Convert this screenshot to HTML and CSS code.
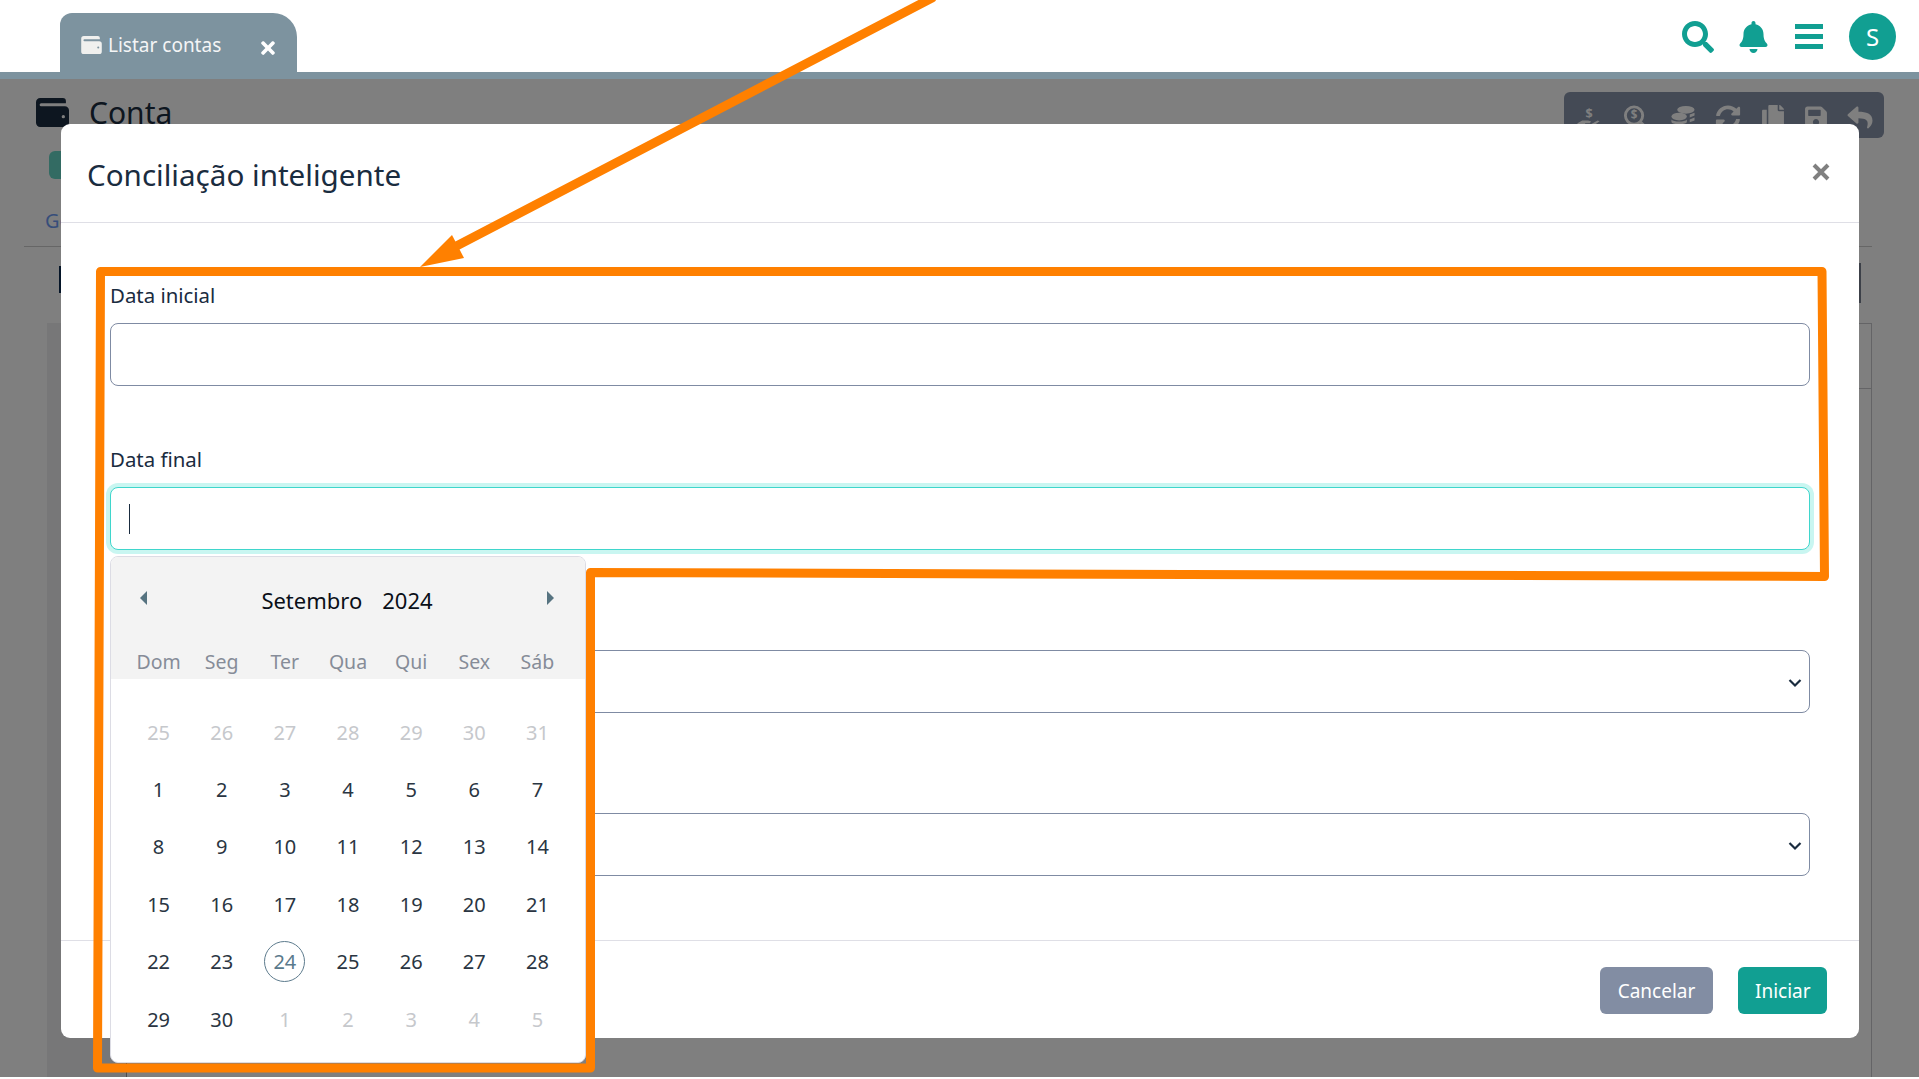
FILE: index.html
```html
<!DOCTYPE html>
<html lang="pt-BR">
<head>
    <meta charset="UTF-8">
    <meta name="viewport" content="width=device-width, initial-scale=1.0">
    <title>Conciliação inteligente</title>
    <link rel="stylesheet" href="styles.css">
</head>
<body>
<div class="page">

    <header class="topbar">
        <div class="tab">
            <svg class="tab-wallet" viewBox="0 0 32 28"><path d="M4 0h22a3 3 0 0 1 3 3v2H5a1.5 1.5 0 0 0 0 3h23a4 4 0 0 1 4 4v12a4 4 0 0 1-4 4H4a4 4 0 0 1-4-4V4a4 4 0 0 1 4-4z"/><circle cx="26.5" cy="18" r="1.6" fill="#7d939f"/></svg>
            <span class="tab-label">Listar contas</span>
            <svg class="tab-close" viewBox="0 0 352 512"><path d="M242.72 256l100.07-100.07c12.28-12.28 12.28-32.19 0-44.48l-22.24-22.24c-12.28-12.28-32.19-12.28-44.48 0L176 189.28 75.93 89.21c-12.28-12.28-32.19-12.28-44.48 0L9.21 111.45c-12.28 12.28-12.28 32.19 0 44.48L109.28 256 9.21 356.07c-12.28 12.28-12.28 32.19 0 44.48l22.24 22.24c12.28 12.28 32.2 12.28 44.48 0L176 322.72l100.07 100.07c12.28 12.28 32.2 12.28 44.48 0l22.24-22.24c12.28-12.28 12.28-32.19 0-44.48L242.72 256z"/></svg>
        </div>
        <div class="top-actions">
            <svg class="ic-search" viewBox="0 0 512 512"><path d="M505 442.7L405.3 343c-4.5-4.5-10.6-7-17-7H372c27.6-35.3 44-79.7 44-128C416 93.1 322.9 0 208 0S0 93.1 0 208s93.1 208 208 208c48.3 0 92.7-16.4 128-44v16.3c0 6.4 2.5 12.5 7 17l99.7 99.7c9.4 9.4 24.6 9.4 33.9 0l28.3-28.3c9.4-9.4 9.4-24.6.1-34zM208 336c-70.7 0-128-57.2-128-128 0-70.7 57.2-128 128-128 70.7 0 128 57.2 128 128 0 70.7-57.2 128-128 128z"/></svg>
            <svg class="ic-bell" viewBox="0 0 448 512"><path d="M224 512c35.32 0 63.97-28.65 63.97-64H160.03c0 35.35 28.65 64 63.97 64zm215.39-149.71c-19.32-20.76-55.47-51.99-55.47-154.29 0-77.7-54.48-139.9-127.94-155.16V32c0-17.67-14.32-32-31.98-32s-31.98 14.33-31.98 32v20.84C118.56 68.1 64.08 130.3 64.08 208c0 102.3-36.15 133.53-55.47 154.29-6 6.45-8.66 14.16-8.61 21.71.11 16.4 12.98 32 32.1 32h383.8c19.12 0 32-15.6 32.1-32 .05-7.55-2.61-15.27-8.61-21.71z"/></svg>
            <div class="ic-menu"><span></span><span></span><span></span></div>
            <div class="avatar">S</div>
        </div>
    </header>
    <div class="tab-line"></div>

    <!-- page behind the modal -->
    <main class="content">
        <div class="title-row">
            <svg class="title-wallet" viewBox="0 0 32 28"><path d="M4 0h22a3 3 0 0 1 3 3v2H5a1.5 1.5 0 0 0 0 3h23a4 4 0 0 1 4 4v12a4 4 0 0 1-4 4H4a4 4 0 0 1-4-4V4a4 4 0 0 1 4-4z"/><circle cx="26.5" cy="18" r="1.6" fill="#fff"/></svg>
            <h1>Conta</h1>
            <div class="toolbar">
                <svg viewBox="0 0 26 26"><text x="13" y="14" text-anchor="middle" class="tool-text">$</text><path d="M1 19l5-3h6l3 1-1 2H9v1h6l7-4 2 1-8 6-5 1-6-1-4 1z"/></svg>
                <svg viewBox="0 0 26 26"><circle cx="12" cy="11" r="9" class="tool-ring"/><text x="12" y="15" text-anchor="middle" class="tool-small">$</text><path d="M18 19l2-2 6 6-2 2z"/></svg>
                <svg viewBox="0 0 26 26"><ellipse cx="16" cy="5" rx="9" ry="4"/><path d="M20 10l5-2v3l-5 2zM20 15l5-2v3l-5 2z"/><ellipse cx="9" cy="12" rx="8" ry="4"/><path d="M1 15c2 3 14 3 16 0v3c-2 3-14 3-16 0zM1 20c2 3 14 3 16 0v2c-2 3-14 3-16 0z"/></svg>
                <svg viewBox="0 0 512 512"><path d="M370.72 133.28C339.458 104.008 298.888 87.962 255.848 88c-77.458.068-144.328 53.178-162.791 126.85-1.344 5.363-6.122 9.15-11.651 9.15H24.103c-7.498 0-13.194-6.807-11.807-14.176C33.933 94.924 134.813 8 256 8c66.448 0 126.791 26.136 171.315 68.685L463.03 40.97C478.149 25.851 504 36.559 504 57.941V192c0 13.255-10.745 24-24 24H345.941c-21.382 0-32.09-25.851-16.971-40.971l41.75-41.749zM32 296h134.059c21.382 0 32.09 25.851 16.971 40.971l-41.75 41.75c31.262 29.273 71.835 45.319 114.876 45.28 77.418-.07 144.315-53.144 162.787-126.849 1.344-5.363 6.122-9.15 11.651-9.15h57.304c7.498 0 13.194 6.807 11.807 14.176C478.067 417.076 377.187 504 256 504c-66.448 0-126.791-26.136-171.315-68.685L48.97 471.03C33.851 486.149 8 475.441 8 454.059V320c0-13.255 10.745-24 24-24z"/></svg>
                <svg viewBox="0 0 448 512"><path d="M320 448v40c0 13.255-10.745 24-24 24H24c-13.255 0-24-10.745-24-24V120c0-13.255 10.745-24 24-24h72v296c0 30.879 25.121 56 56 56h168zm0-344V0H152c-13.255 0-24 10.745-24 24v368c0 13.255 10.745 24 24 24h272c13.255 0 24-10.745 24-24V128H344c-13.2 0-24-10.8-24-24zm120.971-31.029L375.029 7.029A24 24 0 0 0 358.059 0H352v96h96v-6.059a24 24 0 0 0-7.029-16.97z"/></svg>
                <svg viewBox="0 0 448 512"><path d="M433.941 129.941l-83.882-83.882A48 48 0 0 0 316.118 32H48C21.49 32 0 53.49 0 80v352c0 26.51 21.49 48 48 48h352c26.51 0 48-21.49 48-48V163.882a48 48 0 0 0-14.059-33.941zM224 416c-35.346 0-64-28.654-64-64 0-35.346 28.654-64 64-64s64 28.654 64 64c0 35.346-28.654 64-64 64zm96-304.52V212c0 6.627-5.373 12-12 12H76c-6.627 0-12-5.373-12-12V108c0-6.627 5.373-12 12-12h228.52c3.183 0 6.235 1.264 8.485 3.515l3.48 3.48A11.996 11.996 0 0 1 320 111.48z"/></svg>
                <svg viewBox="0 0 512 512"><path d="M8.309 189.836L184.313 37.851C199.719 24.546 224 35.347 224 56.015v80.053c160.629 1.839 288 34.032 288 186.258 0 61.441-39.581 122.309-83.333 154.132-13.653 9.931-33.111-2.533-28.077-18.631 45.344-145.012-21.507-183.51-176.59-185.742V360c0 20.7-24.3 31.453-39.687 18.164l-176.004-152c-11.071-9.562-11.086-26.753 0-36.328z"/></svg>
            </div>
        </div>
        <div class="green-btn"></div>
        <div class="nav-row"><span class="nav-link">Geral</span></div>
        <div class="sub-row">
            <div class="sub-title"></div>
            <div class="sub-action"></div>
        </div>
        <div class="card">
            <div class="card-head"></div>
            <div class="card-body"><div class="card-col"></div></div>
        </div>
    </main>

    <div class="backdrop"></div>

    <section class="modal">
        <div class="modal-head">
            <h2>Conciliação inteligente</h2>
            <svg class="modal-close" viewBox="0 0 18 18"><path d="M2 2l14 14M16 2L2 16"/></svg>
        </div>
        <div class="modal-body">
            <div class="field field-first">
                <label>Data inicial</label>
                <input class="control" type="text">
            </div>
            <div class="field">
                <label>Data final</label>
                <div class="control control-focus"><span class="caret"></span></div>

                <div class="calendar">
                    <div class="cal-top">
                        <div class="cal-month">
                            <span class="arrow arrow-left"></span>
                            <span class="cal-title"><span>Setembro</span><span>2024</span></span>
                            <span class="arrow arrow-right"></span>
                        </div>
                        <div class="cal-grid cal-weekdays">
                            <span>Dom</span><span>Seg</span><span>Ter</span><span>Qua</span><span>Qui</span><span>Sex</span><span>Sáb</span>
                        </div>
                    </div>
                    <div class="cal-grid cal-days">
                        <span class="muted">25</span><span class="muted">26</span><span class="muted">27</span><span class="muted">28</span><span class="muted">29</span><span class="muted">30</span><span class="muted">31</span>
                        <span>1</span><span>2</span><span>3</span><span>4</span><span>5</span><span>6</span><span>7</span>
                        <span>8</span><span>9</span><span>10</span><span>11</span><span>12</span><span>13</span><span>14</span>
                        <span>15</span><span>16</span><span>17</span><span>18</span><span>19</span><span>20</span><span>21</span>
                        <span>22</span><span>23</span><span><b class="today">24</b></span><span>25</span><span>26</span><span>27</span><span>28</span>
                        <span>29</span><span>30</span><span class="muted">1</span><span class="muted">2</span><span class="muted">3</span><span class="muted">4</span><span class="muted">5</span>
                    </div>
                </div>
            </div>
            <div class="field">
                <label>&nbsp;</label>
                <div class="select-wrap">
                    <select class="control"></select>
                    <svg class="chevron" viewBox="0 0 14 10"><path d="M1.5 2L7 7.5 12.5 2"/></svg>
                </div>
            </div>
            <div class="field">
                <label>&nbsp;</label>
                <div class="select-wrap">
                    <select class="control"></select>
                    <svg class="chevron" viewBox="0 0 14 10"><path d="M1.5 2L7 7.5 12.5 2"/></svg>
                </div>
            </div>
        </div>
        <div class="modal-foot">
            <button class="btn btn-grey">Cancelar</button>
            <button class="btn btn-teal">Iniciar</button>
        </div>
    </section>

    <!-- orange markup drawn over the screenshot -->
    <svg class="markup" viewBox="0 0 1919 1077">
        <path class="markup-line" d="M100.5 271.5L1822 271.5L1824.5 576.5L590.5 572.5L590.5 1068L97.5 1068Z"/>
        <path class="markup-line" d="M932 -2L445 252"/>
        <path class="markup-head" d="M420 267L452 235L464 258Z"/>
    </svg>

</div>
</body>
</html>
```

FILE: styles.css
```css
* {
    box-sizing: border-box;
}
body {
    margin: 0;
    background: white;
    font-family: "Noto Sans", "Open Sans", Arial, sans-serif;
    color: #1a2c3f;
}
.page {
    position: relative;
    width: 1919px;
    height: 1077px;
    overflow: hidden;
    background: white;
}

/* top bar */
.topbar {
    position: relative;
    z-index: 2;
    height: 72px;
    display: flex;
    justify-content: space-between;
    align-items: flex-end;
    padding: 0 23px 0 60px;
    background: white;
}
.tab {
    width: 237px;
    height: 59px;
    display: flex;
    align-items: center;
    padding: 5px 22px 0 21px;
    background: #7d939f;
    color: #f4f5f6;
    border-radius: 12px 24px 0 0;
}
.tab-wallet {
    width: 21px;
    height: 18px;
    margin-top: -1px;
    fill: #f0f0ee;
}
.tab-label {
    margin-left: 6px;
    font-size: 19px;
}
.tab-close {
    width: 14px;
    height: 20px;
    margin-left: auto;
    margin-top: 5px;
    fill: white;
}
.top-actions {
    display: flex;
    align-items: center;
    height: 72px;
    padding-top: 1px;
}
.ic-search {
    width: 32px;
    height: 32px;
    fill: #119f92;
}
.ic-bell {
    width: 29px;
    height: 32px;
    margin-left: 25px;
    fill: #119f92;
}
.ic-menu {
    width: 28px;
    margin-left: 27px;
    display: flex;
    flex-direction: column;
    gap: 5px;
}
.ic-menu span {
    height: 5px;
    background: #119f92;
}
.avatar {
    width: 47px;
    height: 47px;
    margin-left: 26px;
    border-radius: 50%;
    background: #119f92;
    color: white;
    font-size: 24px;
    display: flex;
    align-items: center;
    justify-content: center;
}
.tab-line {
    position: relative;
    z-index: 2;
    height: 7px;
    background: #7d939f;
}

/* page behind */
.content {
    padding: 13px 47px 0 24px;
}
.title-row {
    display: flex;
    align-items: flex-start;
    margin-right: -12px;
    height: 46px;
}
.title-wallet {
    width: 33px;
    height: 29px;
    margin: 6px 0 0 12px;
    fill: #1a2c40;
}
.title-row h1 {
    margin: 0 0 0 20px;
    font-size: 30px;
    font-weight: 400;
    line-height: 42px;
}
.toolbar {
    margin-left: auto;
    width: 320px;
    height: 46px;
    padding: 4px 12px 0;
    display: flex;
    gap: 19px;
    align-items: center;
    background: #8894aa;
    border-radius: 6px;
}
.toolbar svg {
    width: 26px;
    height: 25px;
    flex: none;
    fill: white;
}
.toolbar svg:nth-child(2) {
    margin-left: 1px;
}
.toolbar svg:nth-child(3) {
    margin-left: 3px;
}
.toolbar svg:nth-child(6) {
    margin-left: -2px;
}
.toolbar svg:nth-child(7) {
    margin-left: -1px;
}
.tool-text {
    font-size: 13px;
    font-weight: 700;
}
.tool-small {
    font-size: 12px;
    font-weight: 700;
}
.tool-ring {
    fill: none;
    stroke: white;
    stroke-width: 3;
}
.green-btn {
    width: 100px;
    height: 28px;
    margin: 13px 0 0 25px;
    border-radius: 6px;
    background: #66d6c6;
}
.nav-row {
    height: 68px;
    padding: 28px 0 0 21px;
    border-bottom: 1px solid #ccc;
}
.nav-link {
    font-size: 20px;
    color: #6f9cf5;
}
.sub-row {
    display: flex;
    justify-content: space-between;
    height: 40px;
    margin-top: 16px;
}
.sub-title {
    width: 60px;
    height: 27px;
    margin: 3px 0 0 35px;
    background: #0a2a50;
}
.sub-action {
    width: 30px;
    height: 40px;
    margin-right: 11px;
    background: #788090;
}
.card {
    margin: 20px 0 0 23px;
    height: 800px;
    border-right: 1px solid #c8c8cc;
    background: white;
}
.card-head {
    height: 66px;
    margin-left: 14px;
    border-top: 1px solid #c8c8cc;
    border-bottom: 1px solid #c8c8cc;
}
.card-body {
    height: 100%;
}
.card-col {
    width: 80px;
    height: 100%;
    margin-top: -66px;
    border-right: 1px solid #999;
    background: #eeeef0;
}

.backdrop {
    position: absolute;
    top: 79px;
    left: 0;
    right: 0;
    bottom: 0;
    background: rgba(0, 0, 0, 0.5);
    z-index: 1;
}

/* modal */
.modal {
    position: absolute;
    z-index: 3;
    top: 124px;
    left: 61px;
    width: 1798px;
    height: 914px;
    display: flex;
    flex-direction: column;
    background: white;
    border-radius: 9px;
}
.modal-head {
    height: 99px;
    flex: none;
    display: flex;
    align-items: center;
    justify-content: space-between;
    padding: 2px 29px 0 26px;
    border-bottom: 1px solid #dfdfe6;
}
.modal-head h2 {
    margin: 0;
    font-size: 29.6px;
    font-weight: 400;
}
.modal-close {
    width: 18px;
    height: 18px;
    margin-top: -4px;
    fill: none;
    stroke: #808080;
    stroke-width: 4;
}
.modal-body {
    flex: 1;
    padding: 60px 49px 0;
}
.field {
    position: relative;
    margin-bottom: 60.2px;
}
.field-first {
    margin-bottom: 61px;
}
.field label {
    display: block;
    height: 24px;
    margin-bottom: 16px;
    font-size: 20.4px;
    line-height: 24px;
}
.control {
    display: block;
    width: 100%;
    height: 63px;
    padding: 0 18px;
    background: white;
    border: 1px solid #7f8ba3;
    border-radius: 8px;
    appearance: none;
}
.control-focus {
    display: flex;
    align-items: center;
    border-color: #3fd6cc;
    box-shadow: 0 0 0 4px #c9f6f1;
}
.caret {
    width: 1px;
    height: 30px;
    background: #1a2c3f;
}
.select-wrap {
    position: relative;
}
.chevron {
    position: absolute;
    right: 8px;
    top: 28px;
    width: 14px;
    height: 10px;
    fill: none;
    stroke: #1a2c3f;
    stroke-width: 2.2;
}

/* date picker */
.calendar {
    position: absolute;
    z-index: 2;
    top: 109px;
    left: 0;
    width: 476px;
    height: 507px;
    background: white;
    border: 1px solid #dcdce4;
    border-radius: 8px;
    overflow: hidden;
}
.cal-top {
    background: #f3f3f3;
    height: 122px;
}
.cal-month {
    height: 88px;
    display: flex;
    align-items: center;
    justify-content: space-between;
    padding: 0 31px 2px 29px;
}
.cal-title {
    display: flex;
    gap: 20px;
    font-size: 22px;
    color: #0a0f18;
}
.arrow {
    width: 0;
    height: 0;
    margin-top: -5px;
    border-top: 7px solid transparent;
    border-bottom: 7px solid transparent;
}
.arrow-left {
    border-right: 7px solid #567380;
}
.arrow-right {
    border-left: 7px solid #567380;
}
.cal-grid {
    display: grid;
    grid-template-columns: repeat(7, 1fr);
    padding: 0 16px;
    text-align: center;
}
.cal-weekdays {
    height: 34px;
    line-height: 33px;
    font-size: 19.5px;
    color: #868c98;
}
.cal-days {
    padding-top: 24.5px;
    grid-auto-rows: 57.4px;
    font-size: 20px;
    color: #2a3542;
}
.cal-days span {
    display: flex;
    align-items: center;
    justify-content: center;
}
.cal-days .muted {
    color: #c6c8cc;
}
.today {
    width: 41px;
    height: 41px;
    display: flex;
    align-items: center;
    justify-content: center;
    border: 1px solid #5d7b8d;
    border-radius: 50%;
    font-weight: 400;
    color: #5a7a8c;
}

/* footer */
.modal-foot {
    height: 98px;
    flex: none;
    display: flex;
    justify-content: flex-end;
    align-items: flex-start;
    gap: 25px;
    padding: 26px 32px 0 0;
    border-top: 1px solid #dfdfe6;
}
.btn {
    height: 47px;
    padding: 0 17px;
    border: none;
    border-radius: 6px;
    color: white;
    font-family: inherit;
    font-size: 19px;
}
.btn-grey {
    width: 113px;
    background: #828da3;
}
.btn-teal {
    width: 89px;
    background: #119f92;
}

/* annotation */
.markup {
    position: absolute;
    z-index: 4;
    top: 0;
    left: 0;
    width: 1919px;
    height: 1077px;
    pointer-events: none;
}
.markup-line {
    fill: none;
    stroke: #ff8000;
    stroke-width: 9;
    stroke-linejoin: round;
    stroke-linecap: round;
}
.markup-head {
    fill: #ff8000;
}
```
